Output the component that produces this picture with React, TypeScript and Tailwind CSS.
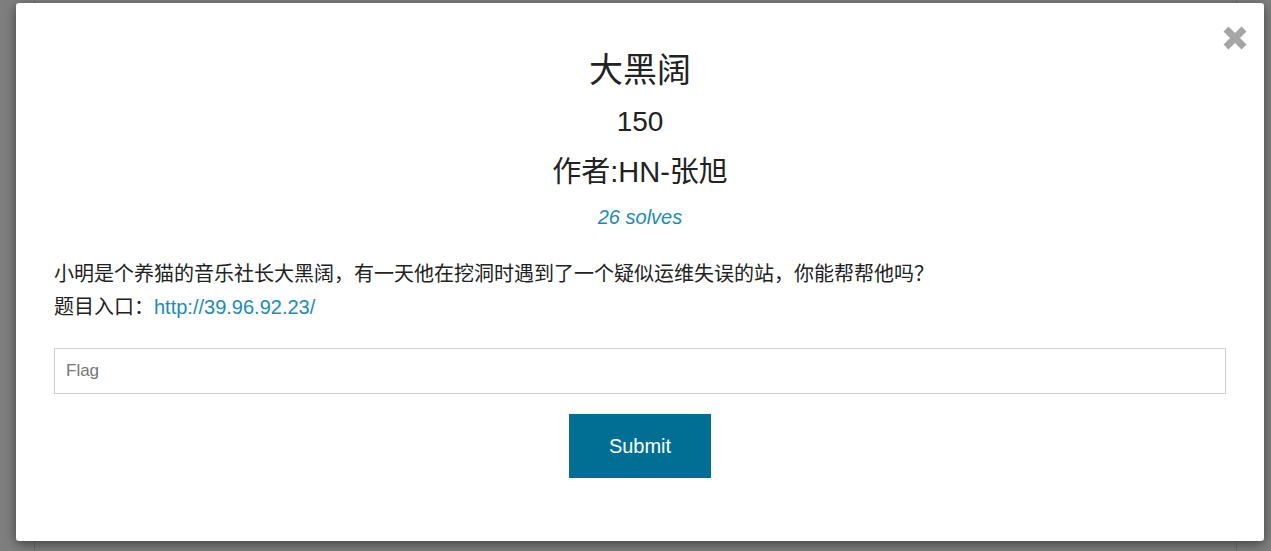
import React from "react";

const font = '"Liberation Sans", Arial, "Noto Sans CJK SC", sans-serif';

export default function App() {
  return (
    <div className="relative w-[1271px] h-[551px] overflow-hidden bg-white" style={{ fontFamily: font }}>
      {/* page underneath */}
      <div className="mx-[34px] h-full border-x border-[#dcdcdc]" />
      {/* backdrop + modal */}
      <div className="absolute inset-0 bg-[rgba(0,0,0,0.5)]">
        <div className="ml-[16px] mt-[3px] w-[1248px] h-[538px] bg-white rounded-[3px] shadow-[0_3px_12px_rgba(0,0,0,0.5)] relative px-[38px] pt-[47px] text-[#222222]">
          <button className="absolute left-[1206px] top-[22px] w-[26px] h-[26px]" aria-label="close">
            <svg width="26" height="26" viewBox="0 0 26 26">
              <path d="M4 4 L22 22 M22 4 L4 22" stroke="#a5a5a5" strokeWidth="7" strokeLinecap="butt" />
            </svg>
          </button>
          <div className="text-center">
            <div className="h-[40px] leading-[40px] text-[34px]">大黑阔</div>
            <div className="mt-[12px] h-[40px] leading-[40px] text-[28px]">150</div>
            <div className="mt-[10px] h-[40px] leading-[40px] text-[29px]">作者:HN-张旭</div>
            <div className="mt-[10px] h-[30px] leading-[30px] text-[20px] italic text-[#1b8ab9]">26 solves</div>
          </div>
          <div className="mt-[26px] text-[20px] leading-[33px]">
            <p>小明是个养猫的音乐社长大黑阔，有一天他在挖洞时遇到了一个疑似运维失误的站，你能帮帮他吗？</p>
            <p>
              题目入口：<a className="text-[#1b8bb8]" href="#">http://39.96.92.23/</a>
            </p>
          </div>
          <input
            className="mt-[24px] block w-full h-[46px] border border-[#cfcfcf] px-[11px] text-[17px] placeholder:text-[#757575] outline-none"
            placeholder="Flag"
          />
          <div className="mt-[20px] flex justify-center">
            <button className="w-[142px] h-[64px] bg-[#006f93] text-white text-[20px]">Submit</button>
          </div>
        </div>
      </div>
    </div>
  );
}
